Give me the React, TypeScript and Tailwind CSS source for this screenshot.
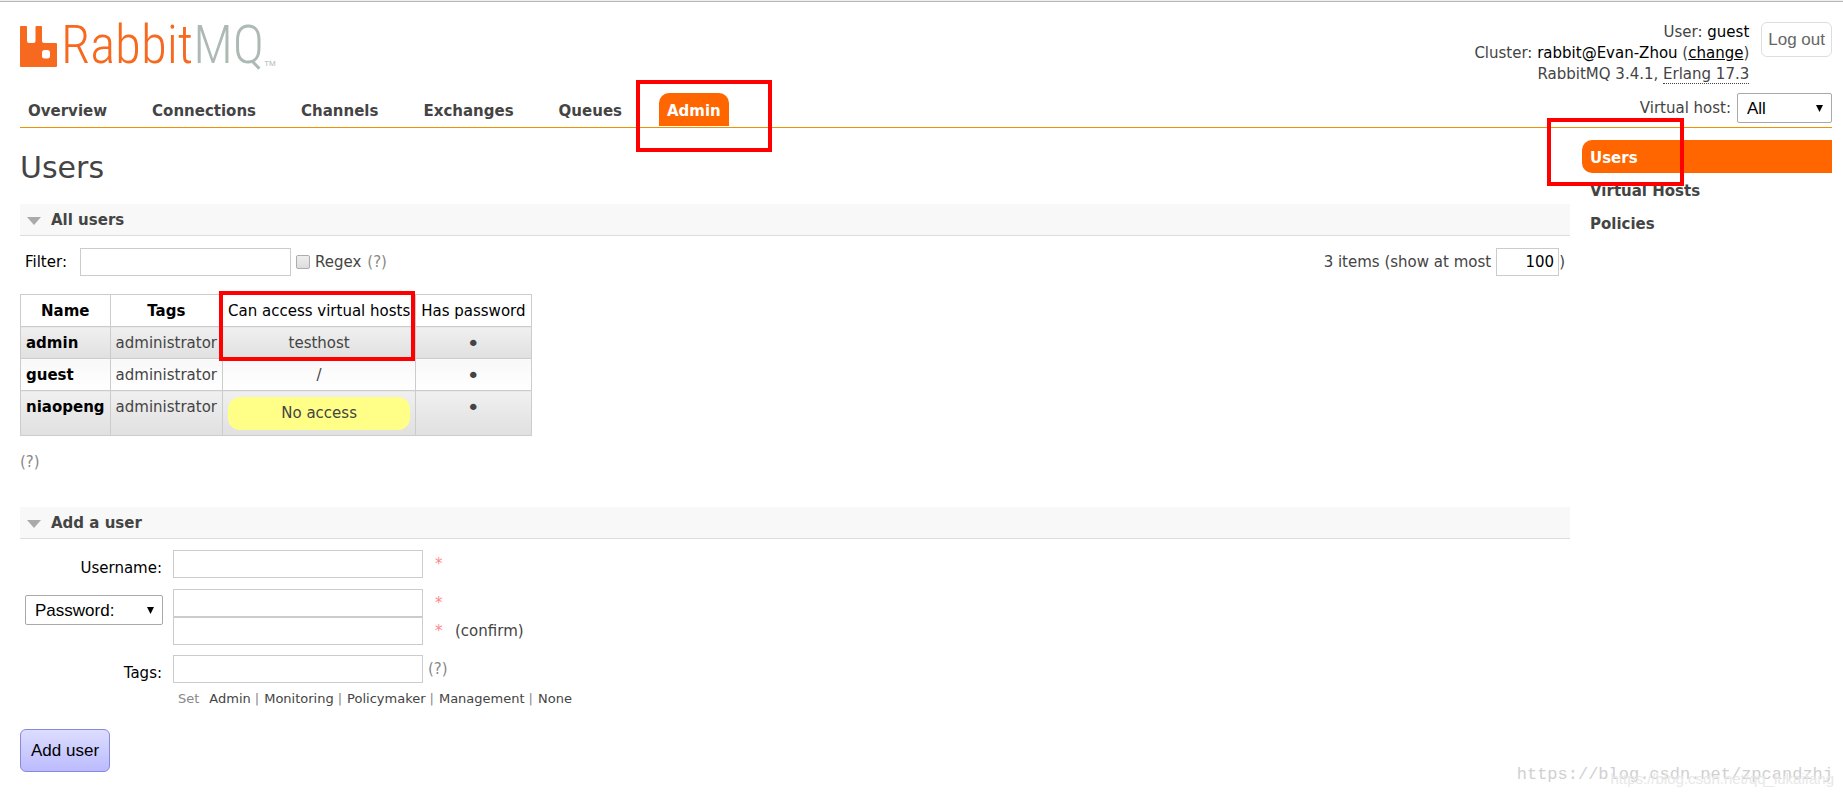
import { ReactNode } from "react";

const TABS = ["Overview", "Connections", "Channels", "Exchanges", "Queues", "Admin"];
const ADMIN_LINKS = ["Users", "Virtual Hosts", "Policies"];
const TAG_PRESETS = ["Admin", "Monitoring", "Policymaker", "Management", "None"];

const USERS = [
  { name: "admin", tags: "administrator", vhosts: "testhost" },
  { name: "guest", tags: "administrator", vhosts: "/" },
  { name: "niaopeng", tags: "administrator", vhosts: null },
];

const textBox = "h-7 border border-[#ccc] bg-white px-1 text-black outline-none";

function Highlight({ className }: { className: string }) {
  return <span className={`pointer-events-none absolute z-10 border-4 border-[#ff0000] ${className}`} />;
}

function Help() {
  return (
    <button type="button" className="text-[#888]" title="Help">
      (?)
    </button>
  );
}

function Section({ title, children }: { title: string; children: ReactNode }) {
  return (
    <section>
      <h2 className="flex h-8 items-center border-b border-[#ddd] bg-[#f8f8f8] pt-0.5 pl-[7px] font-bold">
        <svg width="14" height="8" viewBox="0 0 14 8" className="mr-[10px]" aria-hidden="true">
          <path d="M0 0H14L7 8Z" fill="#aaa" />
        </svg>
        {title}
      </h2>
      {children}
    </section>
  );
}

function Select({ id, label, options, className }: { id: string; label: string; options: string[]; className: string }) {
  return (
    <span className={`relative inline-block ${className}`}>
      <select
        id={id}
        aria-label={label}
        className="h-[30px] w-full appearance-none rounded-[2px] border border-[#a9a9a9] bg-white pl-[9px] font-['Liberation_Sans',sans-serif] text-[17px] text-black"
      >
        {options.map((o) => (
          <option key={o}>{o}</option>
        ))}
      </select>
      <svg width="7" height="7" viewBox="0 0 7 7" className="pointer-events-none absolute top-3 right-[9px]" aria-hidden="true">
        <path d="M0 0H7L3.500 7Z" fill="#000" />
      </svg>
    </span>
  );
}

function Logo() {
  return (
    <a href="#/" className="flex items-start" aria-label="RabbitMQ">
      <svg width="37" height="41" viewBox="0 0 37 41" aria-hidden="true">
        <path
          fill="#f6691f"
          fillRule="evenodd"
          d="M1 0H6Q7 0 7 1V15Q7 17 9 17H13.500Q15.500 17 15.500 15V1Q15.500 0 16.500 0H21Q22 0 22 1V15Q22 17 24 17H36Q37 17 37 18V40Q37 41 36 41H1Q0 41 0 40V1Q0 0 1 0ZM24.500 24Q22 24 22 26.500V30Q22 32.500 24.500 32.500H27.500Q30 32.500 30 30V26.500Q30 24 27.500 24Z"
        />
      </svg>
      <span className="ml-1 h-[42px] font-['Roboto_Condensed_Light','Roboto_Condensed','Open_Sans_Condensed_Light','Open_Sans_Condensed',sans-serif] text-[53px] font-light leading-[38px] text-[#f6691f]">
        Rabbit<span className="text-[#adb9b3]">MQ</span>
      </span>
      <span className="self-end font-['Liberation_Sans',sans-serif] text-[8px] leading-[8px] text-[#adb9b3]">TM</span>
    </a>
  );
}

function Header() {
  return (
    <header className="border-b border-[#f29100]">
      <div className="flex justify-between">
        <div className="pt-6">
          <Logo />
        </div>
        <div className="flex gap-3 pt-5">
          <div className="text-right leading-[21px]">
            <div>
              User: <span className="text-black">guest</span>
            </div>
            <div>
              Cluster: <span className="text-black">rabbit@Evan-Zhou</span> (
              <a href="#/cluster-name" className="text-black underline">
                change
              </a>
              )
            </div>
            <div>
              RabbitMQ 3.4.1, <abbr className="border-b border-dotted border-[#444] no-underline">Erlang 17.3</abbr>
            </div>
          </div>
          <button
            type="button"
            className="h-[35px] rounded-[6px] border border-[#ddd] bg-white px-[6px] font-['Liberation_Sans',sans-serif] text-[17px] text-[#666]"
          >
            Log out
          </button>
        </div>
      </div>
      <div className="flex items-end justify-between pt-2">
        <nav className="flex gap-[29px] pb-px">
          {TABS.map((tab) => (
            <a
              key={tab}
              href={`#/${tab.toLowerCase()}`}
              className={`relative h-[33px] px-2 font-bold leading-[37px] ${
                tab === "Admin" ? "rounded-t-[10px] bg-[#ff6600] text-white" : "text-[#444]"
              }`}
            >
              {tab}
              {tab === "Admin" && <Highlight className="-top-[13px] -left-[23px] h-[72px] w-[136px]" />}
            </a>
          ))}
        </nav>
        <div className="flex items-center gap-[6px] pb-1">
          <label htmlFor="vhost">Virtual host:</label>
          <Select id="vhost" label="Virtual host" options={["All", "/", "testhost"]} className="w-[95px]" />
        </div>
      </div>
    </header>
  );
}

function UsersTable() {
  const cell = "border border-[#ccc] px-[5px] pt-[6px] pb-1 align-top leading-[21px]";
  return (
    <table className="border-collapse">
      <thead className="text-black">
        <tr>
          <th className={cell}>Name</th>
          <th className={cell}>Tags</th>
          <th className={`relative font-normal ${cell}`}>
            Can access virtual hosts
            <Highlight className="-top-1 -left-1 h-[70px] w-[196px]" />
          </th>
          <th className={`font-normal ${cell}`}>Has password</th>
        </tr>
      </thead>
      <tbody>
        {USERS.map((u, i) => (
          <tr
            key={u.name}
            className={
              i % 2 === 0
                ? "*:bg-linear-to-b *:from-[#f0f0f0] *:to-[#e0e0e0]"
                : "*:bg-linear-to-b *:from-[#f8f8f8] *:to-white"
            }
          >
            <td className={cell}>
              <a href={`#/users/${u.name}`} className="font-bold text-black">
                {u.name}
              </a>
            </td>
            <td className={cell}>{u.tags}</td>
            <td className={`text-center ${cell}`}>
              {u.vhosts ?? <p className="mb-px rounded-[12px] bg-[#ffff88] py-[6px]">No access</p>}
            </td>
            <td className={`text-center text-[22px] ${cell}`}>•</td>
          </tr>
        ))}
      </tbody>
    </table>
  );
}

function AddUserForm() {
  const star = <span className="w-5 pt-1 pl-3 text-[#ff8888]">*</span>;
  return (
    <form onSubmit={(e) => e.preventDefault()}>
      <div className="grid grid-cols-[142px_1fr] gap-x-[11px] gap-y-[10px] pt-[11px]">
        <label htmlFor="username" className="pt-2 text-right text-black">
          Username:
        </label>
        <div className="flex">
          <input id="username" className={`w-[250px] ${textBox}`} />
          {star}
        </div>
        <div className="pt-[6px] pl-[5px]">
          <Select id="has-password" label="Password type" options={["Password:", "No password"]} className="w-[138px]" />
        </div>
        <div>
          <div className="flex">
            <input type="password" aria-label="Password" className={`w-[250px] ${textBox}`} />
            {star}
          </div>
          <div className="flex">
            <input type="password" id="confirm" aria-label="Confirm password" className={`w-[250px] ${textBox}`} />
            {star}
            <label htmlFor="confirm" className="pt-1 pl-3">
              (confirm)
            </label>
          </div>
        </div>
        <label htmlFor="tags" className="pt-2 text-right text-black">
          Tags:
        </label>
        <div>
          <div className="flex">
            <input id="tags" className={`mr-[5px] w-[250px] ${textBox}`} />
            <Help />
          </div>
          <div className="flex gap-1 pt-[6px] pl-[5px] text-[13px] leading-5 text-[#888]">
            <span className="mr-[6px]">Set</span>
            {TAG_PRESETS.map((t, i) => (
              <span key={t} className="flex gap-[5px]">
                {i > 0 && <span>|</span>}
                <button type="button" className="text-[#444]">
                  {t}
                </button>
              </span>
            ))}
          </div>
        </div>
      </div>
      <button
        type="submit"
        className="mt-5 h-[43px] rounded-[6px] border border-[#8888dd] bg-linear-to-b from-[#ddddff] to-[#bbbbff] px-[10px] font-['Liberation_Sans',sans-serif] text-[17px] text-black"
      >
        Add user
      </button>
    </form>
  );
}

export default function App() {
  return (
    <div className="relative min-h-screen border-t border-[#eee] bg-white font-['DejaVu_Sans',sans-serif] text-[15px] leading-[21px] text-[#444]">
      <div className="border-t border-[#b6b6b6] pr-[11px] pl-5">
        <Header />
        <div className="flex gap-3">
          <main className="min-w-0 flex-1">
            <h1 className="pt-5 pb-[17px] text-[30px] leading-[39px]">Users</h1>
            <Section title="All users">
              <div className="flex items-center justify-between pt-3">
                <div className="flex items-center pl-[5px]">
                  <label htmlFor="filter" className="mr-[13px] text-black">
                    Filter:
                  </label>
                  <input id="filter" className={`w-[211px] ${textBox}`} />
                  <input
                    id="regex"
                    type="checkbox"
                    className="mr-[5px] ml-[5px] size-[14px] appearance-none rounded-[2px] border border-[#adadad] bg-linear-to-b from-[#eee] to-[#ddd]"
                  />
                  <label htmlFor="regex" className="mr-[6px]">
                    Regex
                  </label>
                  <Help />
                </div>
                <div className="flex items-center pr-[5px]">
                  <label htmlFor="limit" className="mr-[5px]">
                    3 items (show at most
                  </label>
                  <input id="limit" defaultValue="100" className={`w-[63px] text-right ${textBox}`} />
                  <span>)</span>
                </div>
              </div>
              <div className="pt-[18px]">
                <UsersTable />
              </div>
              <div className="pt-4 pb-[34px]">
                <Help />
              </div>
            </Section>
            <Section title="Add a user">
              <AddUserForm />
            </Section>
          </main>
          <aside className="relative w-[250px] shrink-0 pt-3">
            <Highlight className="-top-[10px] -left-[35px] h-[68px] w-[137px]" />
            <ul>
              {ADMIN_LINKS.map((l) => (
                <li key={l}>
                  <a
                    href="#/users"
                    className={`block h-[33px] pl-2 leading-[37px] font-bold ${
                      l === "Users" ? "rounded-l-[10px] bg-[#ff6600] text-white" : "text-[#444]"
                    }`}
                  >
                    {l}
                  </a>
                </li>
              ))}
            </ul>
          </aside>
        </div>
      </div>
      <span className="pointer-events-none absolute right-[10px] bottom-2 font-['Liberation_Mono',monospace] text-[17px] text-[#d0d0d0]">
        https://blog.csdn.net/zpcandzhj
      </span>
      <span className="pointer-events-none absolute right-[9px] bottom-1 font-['Liberation_Sans',sans-serif] text-[15px] text-[#e8e8e8]">
        https://blog.csdn.net/qq_lukaifang
      </span>
    </div>
  );
}
